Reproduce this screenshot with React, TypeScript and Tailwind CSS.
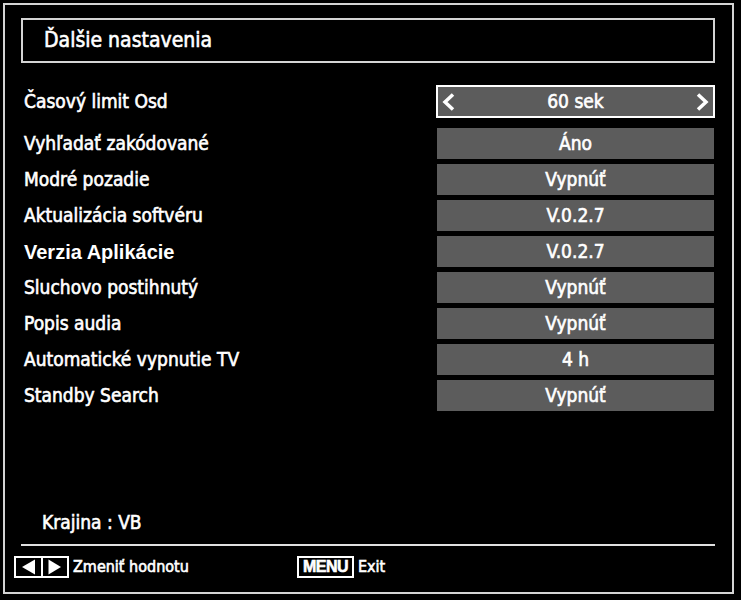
import React from 'react';

const rows: { label: string; value: string; arial?: boolean }[] = [
  { label: 'Vyhľadať zakódované', value: 'Áno' },
  { label: 'Modré pozadie', value: 'Vypnúť' },
  { label: 'Aktualizácia softvéru', value: 'V.0.2.7' },
  { label: 'Verzia Aplikácie', value: 'V.0.2.7', arial: true },
  { label: 'Sluchovo postihnutý', value: 'Vypnúť' },
  { label: 'Popis audia', value: 'Vypnúť' },
  { label: 'Automatické vypnutie TV', value: '4 h' },
  { label: 'Standby Search', value: 'Vypnúť' },
];

const Chevron = ({ dir }: { dir: 'left' | 'right' }) => (
  <svg width="13" height="18" viewBox="0 0 13 18" className="shrink-0">
    <path
      d={dir === 'left' ? 'M11 1.5 L3 9 L11 16.5' : 'M2 1.5 L10 9 L2 16.5'}
      fill="none"
      stroke="#fff"
      strokeWidth="3.5"
      strokeLinejoin="miter"
    />
  </svg>
);

const App: React.FC = () => {
  return (
    <div className="w-[741px] h-[600px] bg-black pt-[3px] pl-[3px] font-['DejaVu_Sans_Condensed','DejaVu_Sans',sans-serif] font-stretch-condensed text-white [-webkit-text-stroke:0.6px_white]">
      <div className="w-[731px] h-[591px] border-2 border-[#d4d4d4] pt-[13px] pl-[16px] pb-[14px] flex flex-col">
        {/* Title */}
        <div className="w-[694px] h-[45px] border-2 border-[#d4d4d4] flex items-center pl-[21px]">
          <span className="text-[21px] leading-none">Ďalšie nastavenia</span>
        </div>

        {/* Selected row */}
        <div className="w-[694px] mt-[22px] flex items-center justify-between">
          <span className="pl-[3px] text-[19px] leading-none">Časový limit Osd</span>
          <div className="w-[279px] h-[33px] border-2 border-white bg-[#5c5c5c] flex items-center justify-between px-[4px]">
            <Chevron dir="left" />
            <span className="text-[19px] leading-none">60 sek</span>
            <Chevron dir="right" />
          </div>
        </div>

        {/* Other rows */}
        <div className="w-[694px] mt-[10px] flex flex-col gap-[5px]">
          {rows.map((r) => (
            <div key={r.label} className="flex items-center justify-between h-[31px]">
              <span
                className={
                  r.arial
                    ? "pl-[3px] font-['Liberation_Sans',Arial,sans-serif] font-bold font-stretch-normal text-[20px] leading-none [-webkit-text-stroke:0px]"
                    : 'pl-[3px] text-[19px] leading-none'
                }
              >
                {r.label}
              </span>
              <div className="w-[277px] h-[31px] mr-[1px] bg-[#5c5c5c] flex items-center justify-center">
                <span className="text-[19px] leading-none">{r.value}</span>
              </div>
            </div>
          ))}
        </div>

        {/* Country */}
        <div className="mt-auto h-[24px] flex items-center pl-[21px]">
          <span className="text-[19px] leading-none">Krajina : VB</span>
        </div>

        <div className="mt-[10px] w-[694px] h-[2px] bg-[#e0e0e0]" />

        {/* Footer */}
        <div className="mt-[10px] -ml-[7px] flex items-center h-[22px]">
          <div className="w-[283px] flex items-center gap-[4px]">
            <div className="w-[55px] h-[22px] border-2 border-white flex">
              <div className="w-[27px] h-full border-r-2 border-white flex items-center justify-center">
                <svg width="15" height="16" viewBox="0 0 15 16">
                  <path d="M1 8 L14 0.5 L14 15.5 Z" fill="#fff" />
                </svg>
              </div>
              <div className="flex-1 h-full flex items-center justify-center">
                <svg width="14" height="16" viewBox="0 0 14 16">
                  <path d="M13 8 L0.5 0.5 L0.5 15.5 Z" fill="#fff" />
                </svg>
              </div>
            </div>
            <span className="text-[16px] leading-none">Zmeniť hodnotu</span>
          </div>
          <div className="flex items-center gap-[4px]">
            <div className="w-[57px] h-[22px] border-2 border-white flex items-center justify-center">
              <span className="font-['Liberation_Sans',Arial,sans-serif] font-black font-stretch-normal text-[16px] leading-none tracking-[-0.5px]">
                MENU
              </span>
            </div>
            <span className="text-[16px] leading-none">Exit</span>
          </div>
        </div>
      </div>
    </div>
  );
};

export default App;
